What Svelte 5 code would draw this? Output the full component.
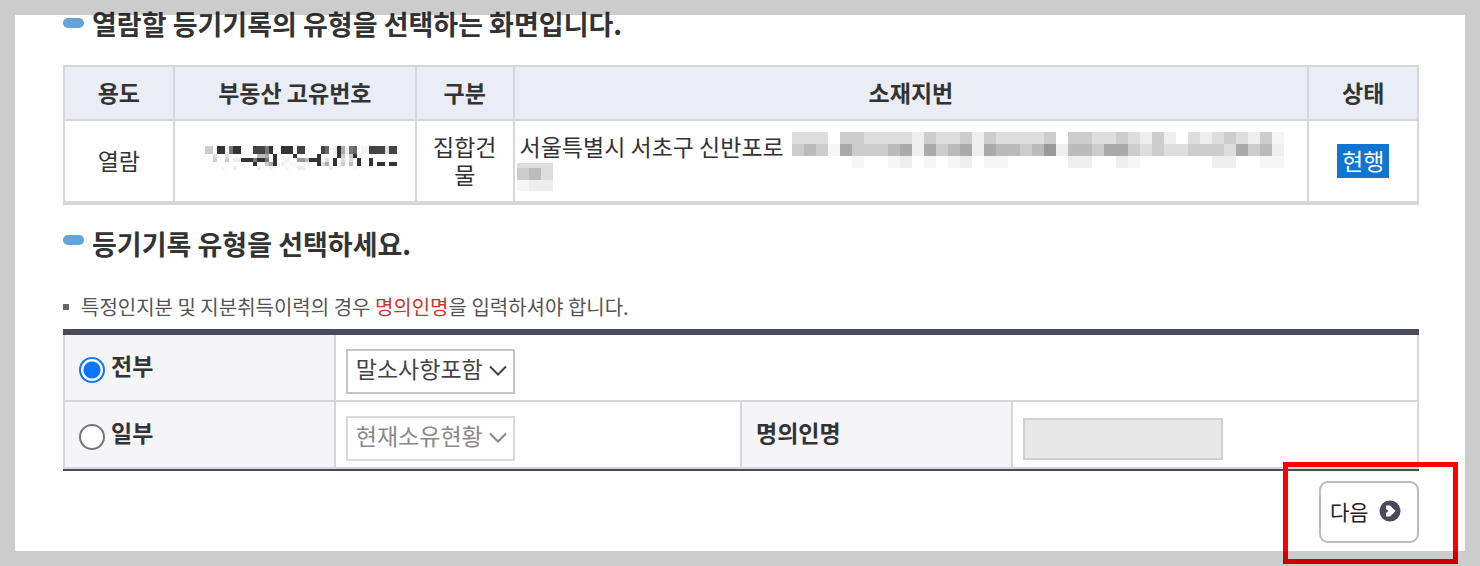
<script lang="ts">
  type Mosaic = { cell: number; rows: { h: number; cells: string }[] };

  // one hex digit per cell gives its grey level, a dot leaves the cell empty
  const numberMask: Mosaic = {
    cell: 4,
    rows: [
      { h: 8, cells: 'cc.33f733...44473..333f44....46.e3ae76.ff4444d44' },
      { h: 4, cells: '..d..d.......bba.3....3.....3....3c.c3..........' },
      { h: 4, cells: '..c..c.ee3337337.3..e..99b333.d.3.d.d.3..3......' },
      { h: 4, cells: '.....f......3..ca3.e.ff.....3da.3.c.b.3..3.33.33' },
      { h: 4, cells: '....f..e.....e..f...f..ee......e.....f..........' }
    ]
  };

  const addressMask: Mosaic = {
    cell: 12,
    rows: [
      { h: 12, cells: 'ddd.ccddddecddcecddddc.ccddcdece.dedcdecf' },
      { h: 12, cells: 'cbcfacccbaeacbaeabbcb9ebbcaacdcddcccdacbe' },
      { h: 12, cells: '.....f..fe.f.fe.ff.....ee..ef......ee..ff' }
    ]
  };

  const restMask: Mosaic = {
    cell: 12,
    rows: [
      { h: 5, cells: 'ddd' },
      { h: 12, cells: 'cbd' },
      { h: 11, cells: 'fee' }
    ]
  };

  let kind = $state('all');
  let allOption = $state('말소사항포함');
  let partOption = $state('현재소유현황');

  function grey(c: string) {
    return c === 'f' ? '#f6f6f6' : `#${c}${c}${c}`;
  }

  function rects(mask: Mosaic) {
    let y = 0;
    return mask.rows.flatMap(({ h, cells }) => {
      const top = y;
      y += h;
      return [...cells]
        .map((c, i) => ({ x: i * mask.cell, y: top, w: mask.cell, h, fill: grey(c), empty: c === '.' }))
        .filter((r) => !r.empty);
    });
  }

  function size(mask: Mosaic) {
    return {
      width: mask.rows[0].cells.length * mask.cell,
      height: mask.rows.reduce((sum, r) => sum + r.h, 0)
    };
  }
</script>

{#snippet mosaic(mask: Mosaic)}
  <svg class="mosaic" {...size(mask)} shape-rendering="crispEdges" aria-hidden="true">
    {#each rects(mask) as r}
      <rect x={r.x} y={r.y} width={r.w} height={r.h} fill={r.fill} />
    {/each}
  </svg>
{/snippet}

{#snippet chevron()}
  <svg class="chevron" width="18" height="12" viewBox="0 0 18 12" aria-hidden="true">
    <path d="M1 1.5 9 9.5 17 1.5" fill="none" stroke="currentColor" stroke-width="2" />
  </svg>
{/snippet}

<main class="page">
  <h2>열람할 등기기록의 유형을 선택하는 화면입니다.</h2>

  <table class="list">
    <colgroup>
      <col style="width: 8.1%" />
      <col style="width: 17.9%" />
      <col style="width: 7.2%" />
      <col />
      <col style="width: 8.1%" />
    </colgroup>
    <thead>
      <tr>
        <th>용도</th>
        <th>부동산 고유번호</th>
        <th>구분</th>
        <th>소재지번</th>
        <th>상태</th>
      </tr>
    </thead>
    <tbody>
      <tr>
        <td>열람</td>
        <td class="number">{@render mosaic(numberMask)}</td>
        <td class="type">집합건물</td>
        <td class="place">
          <div class="address">
            <span>서울특별시 서초구 신반포로</span>
            {@render mosaic(addressMask)}
          </div>
          <div class="rest">{@render mosaic(restMask)}</div>
        </td>
        <td class="status"><span class="state">현행</span></td>
      </tr>
    </tbody>
  </table>

  <h2 class="second">등기기록 유형을 선택하세요.</h2>

  <p class="hint">특정인지분 및 지분취득이력의 경우 <em>명의인명</em>을 입력하셔야 합니다.</p>

  <div class="form-box">
    <table class="form">
      <colgroup>
        <col style="width: 20%" />
        <col style="width: 30%" />
        <col style="width: 20%" />
        <col style="width: 30%" />
      </colgroup>
      <tbody>
        <tr>
          <th>
            <label class="choice"><input type="radio" name="kind" value="all" bind:group={kind} />전부</label>
          </th>
          <td colspan="3">
            <div class="select">
              <select aria-label="전부" bind:value={allOption} disabled={kind !== 'all'}>
                <option>말소사항포함</option>
              </select>
              {@render chevron()}
            </div>
          </td>
        </tr>
        <tr>
          <th>
            <label class="choice"><input type="radio" name="kind" value="part" bind:group={kind} />일부</label>
          </th>
          <td>
            <div class="select">
              <select aria-label="일부" bind:value={partOption} disabled={kind !== 'part'}>
                <option>현재소유현황</option>
              </select>
              {@render chevron()}
            </div>
          </td>
          <th><label for="holder">명의인명</label></th>
          <td><input id="holder" type="text" disabled={kind !== 'part'} /></td>
        </tr>
      </tbody>
    </table>
  </div>

  <div class="actions">
    <div class="highlight">
      <button type="button">
        다음
        <svg width="22" height="22" viewBox="0 0 22 22" aria-hidden="true">
          <circle cx="11" cy="11" r="10.5" fill="#4b4858" />
          <path d="M7 5.5H11L16.5 11 11 16.5H7V13L9.5 11 7 9Z" fill="#fff" />
        </svg>
      </button>
    </div>
  </div>
</main>
<div class="frame"></div>

<style>
  :global(body) {
    margin: 0;
    background: #fff;
  }

  .page {
    padding: 6px 61px 0 63px;
    font-family: 'Noto Sans CJK KR', sans-serif;
    font-size: 23px;
    line-height: 28px;
    color: #333;
  }

  .frame {
    position: fixed;
    inset: 0;
    border: 15px solid rgba(0, 0, 0, 0.2);
    pointer-events: none;
  }

  h2 {
    display: flex;
    gap: 8px;
    margin: 0;
    font-size: 27px;
    line-height: 36px;
  }

  h2::before {
    content: '';
    width: 21px;
    height: 10px;
    margin-top: 12px;
    border-radius: 5px;
    background: #61a5da;
  }

  .second {
    margin-top: 21px;
  }

  .second::before {
    margin-top: 9px;
  }

  table {
    width: 100%;
    border-collapse: collapse;
    table-layout: fixed;
  }

  th,
  td {
    box-sizing: border-box;
    border: 2px solid #d7d7db;
    padding: 0;
  }

  .list {
    margin-top: 23px;
    border-bottom: 4px solid #d7d7db;
  }

  .list th {
    height: 54px;
    padding-bottom: 3px;
    background: #eaedf6;
  }

  .list td {
    height: 83px;
    padding-bottom: 3px;
    text-align: center;
  }

  .list .type {
    padding: 0 12px 3px;
    word-break: break-all;
  }

  .list .number {
    padding: 0 0 6px 12px;
  }

  .list .place,
  .list .status {
    padding-bottom: 0;
  }

  .mosaic {
    display: block;
    flex: none;
  }

  .number .mosaic {
    margin: 0 auto;
  }

  .address {
    display: flex;
    gap: 8px;
    height: 31px;
    padding-left: 5px;
    text-align: left;
    white-space: nowrap;
  }

  .rest {
    padding-left: 2px;
  }

  .state {
    display: inline-block;
    padding: 2px 5px 4px;
    background: #0f75d1;
    color: #fff;
  }

  .hint {
    display: flex;
    white-space: pre;
    align-items: center;
    margin: 31px 0 8px;
    font-size: 20px;
    color: #555;
  }

  .hint::before {
    content: '';
    width: 6px;
    height: 6px;
    margin-right: 12px;
    background: #666;
  }

  .hint em {
    font-style: normal;
    color: #c0392b;
  }

  .form-box {
    border-bottom: 2px solid #4b4a5c;
  }

  .form {
    border-top: 6px solid #4b4a5c;
  }

  .form th {
    height: 67px;
    padding: 0 0 5px 14px;
    background: #f5f5f8;
    text-align: left;
  }

  .form tr:first-child th {
    height: 69px;
  }

  .form td {
    padding-left: 10px;
  }

  .choice {
    display: flex;
    align-items: center;
    gap: 6px;
  }

  input[type='radio'] {
    appearance: none;
    box-sizing: border-box;
    width: 26px;
    height: 26px;
    margin: 9px 0 0;
    border: 2px solid #767676;
    border-radius: 50%;
    background: #fff;
  }

  input[type='radio']:checked {
    border-color: #0a75ff;
    background: radial-gradient(circle, #0a75ff 8px, #fff 9px);
  }

  .select {
    display: grid;
    width: 169px;
    margin-top: 7px;
    align-items: center;
  }

  .select > * {
    grid-area: 1 / 1;
  }

  select {
    appearance: none;
    box-sizing: border-box;
    height: 45px;
    padding: 0 8px 6px;
    border: 2px solid #c5c5c5;
    border-radius: 0;
    background: #fff;
    font: inherit;
    color: #444;
    opacity: 1;
  }

  select:disabled {
    border-color: #d9d9d9;
    color: #888;
  }

  .chevron {
    justify-self: end;
    margin-right: 8px;
    color: #444;
    pointer-events: none;
  }

  select:disabled + .chevron {
    color: #888;
  }

  input[type='text'] {
    display: block;
    box-sizing: border-box;
    width: 200px;
    height: 42px;
    margin-top: 8px;
    padding: 0 8px;
    border: 2px solid #d0d0d0;
    background: #e8e8e8;
    font: inherit;
  }

  .actions {
    display: flex;
    justify-content: flex-end;
  }

  .highlight {
    position: relative;
    margin: -9px -39px 0 0;
    padding: 14px 34px 16px 31px;
    border: 5px solid #f00;
  }

  button {
    display: flex;
    box-sizing: border-box;
    align-items: center;
    gap: 10px;
    width: 100px;
    height: 62px;
    padding: 0 9px 2px;
    border: 2px solid #bbb;
    border-radius: 9px;
    background: #fff;
    font: inherit;
    font-size: 21px;
    color: #222;
    white-space: nowrap;
  }

  button svg {
    flex: none;
  }
</style>
